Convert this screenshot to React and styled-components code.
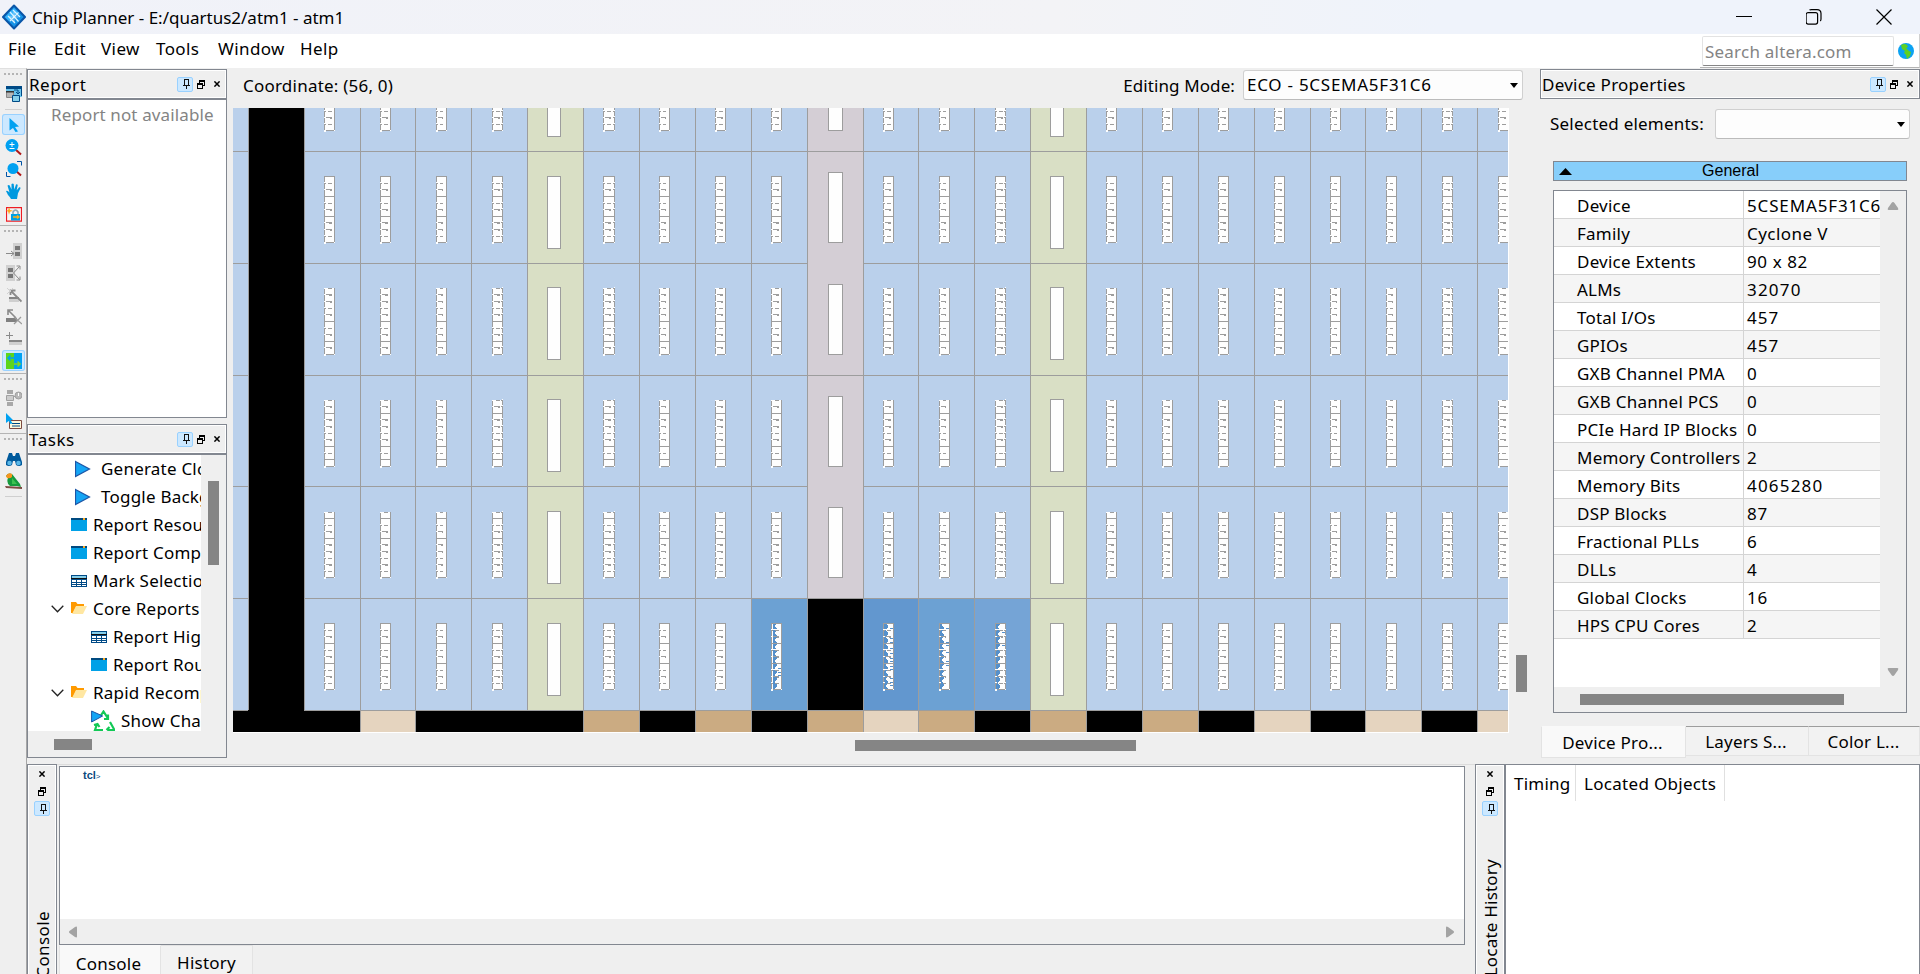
import React from "react";
import styled, { createGlobalStyle } from "styled-components";

const Global = createGlobalStyle`
  * { box-sizing: border-box; }
  html, body { margin: 0; padding: 0; overflow: hidden; }
  body { font-family: "Noto Sans", "Open Sans", sans-serif; font-size: 17px; color: #000; background: #efefef; }
  svg { display: block; flex: none; }
`;

const EDGE = "#828790";

const Label = styled.span`
  white-space: nowrap;
  flex: none;
  line-height: 22px;
  letter-spacing: ${(p) => p.$ls ?? 0.22}px;
  font-size: ${(p) => p.$size ?? 17}px;
  color: ${(p) => p.$color ?? "#000"};
`;

const Window = styled.div`
  width: 1920px;
  height: 974px;
  display: flex;
  flex-direction: column;
  overflow: hidden;
  background: #efefef;
`;
const TitleBar = styled.header`
  height: 34px;
  flex: none;
  display: flex;
  align-items: center;
  padding: 0 28px 0 2px;
  background: linear-gradient(90deg, #f0f2f9, #f3f3f6 55%, #eff3fb 75%, #eff3fb);
`;
const TitleText = styled(Label)`
  margin: 1px auto 0 6px;
`;
const WindowButtons = styled.div`
  display: flex;
  align-items: center;
  gap: 54px;
`;
const MenuBar = styled.nav`
  height: 34px;
  flex: none;
  display: flex;
  background: #fff;
`;
const Menus = styled.div`
  display: flex;
  flex: 1;
  padding: 4px 0 0 8px;
`;
const MenuItem = styled(Label)`
  width: ${(p) => p.$w}px;
`;
const SearchCell = styled.div`
  width: 220px;
  display: flex;
  padding: 2px 0 0 2px;
  border-bottom: 1px solid #b4b4b4;
  border-right: 1px solid #d0d0d0;
`;
const SearchBox = styled.div`
  width: 192px;
  height: 30px;
  border: 1px solid #e3e3e3;
  border-bottom: 1px solid #868686;
  border-radius: 2px;
  padding: 3px 0 0 2px;
`;
const Globe = styled.div`
  padding: 7px 0 0 4px;
`;

const Workspace = styled.div`
  flex: 1;
  display: flex;
  min-height: 0;
`;
const ToolStrip = styled.aside`
  width: 27px;
  flex: none;
  border-right: 1px solid #a6a6a6;
  border-top: 1px solid #e0e0e0;
  display: flex;
  flex-direction: column;
`;
const Tool = styled.div`
  height: ${(p) => (p.$on ? 21 : 22)}px;
  flex: none;
  margin: ${(p) => p.$gap ?? 0}px 1px 0 2px;
  display: flex;
  align-items: center;
  justify-content: center;
  border-radius: 3px;
  background: ${(p) => (p.$on ? "#cce8ff" : "transparent")};
  box-shadow: ${(p) => (p.$on ? "inset 0 0 0 1px #99d1ff" : "none")};
`;
const Rule = styled.div`
  height: 1px;
  flex: none;
  margin: ${(p) => p.$gap ?? 0}px ${(p) => (p.$short ? 4 : 0)}px 0 ${(p) => (p.$short ? 5 : 0)}px;
  background: ${(p) => (p.$short ? "#cfcfcf" : "#b4b4b4")};
`;
const Handle = styled.div`
  height: 10px;
  flex: none;
  display: flex;
  align-items: center;
  justify-content: center;
  gap: 2px;
`;
const Dot = styled.i`
  width: 2px;
  height: 2px;
  background: #b4b4b4;
`;

const Docks = styled.div`
  flex: 1;
  display: flex;
  flex-direction: column;
  min-width: 0;
`;
const UpperDocks = styled.div`
  height: 696px;
  flex: none;
  display: flex;
`;
const LowerDocks = styled.div`
  height: 210px;
  flex: none;
  display: flex;
`;
const LeftDocks = styled.div`
  width: 200px;
  flex: none;
  padding-top: 1px;
  display: flex;
  flex-direction: column;
  gap: 6px;
`;
const Dock = styled.section`
  height: ${(p) => p.$h}px;
  flex: none;
  display: flex;
  flex-direction: column;
`;
const DockHead = styled.div`
  height: ${(p) => (p.$joined ? 31 : 30)}px;
  flex: none;
  display: flex;
  align-items: center;
  border: 1px solid ${EDGE};
  border-bottom-width: ${(p) => (p.$joined ? 2 : 1)}px;
  box-shadow: inset 0 0 0 1px #fff;
  padding: 0 6px 0 1px;
`;
const DockTitle = styled(Label)`
  margin: 1px auto 0 0;
`;
const DockButtons = styled.div`
  display: flex;
  flex-direction: ${(p) => (p.$vertical ? "column" : "row")};
  align-items: center;
  gap: ${(p) => (p.$vertical ? 5 : 4)}px;
`;
const PinBox = styled.div`
  width: 16px;
  height: 15px;
  border: 1px solid #99d1ff;
  border-radius: 2px;
  background: #cce8ff;
  display: flex;
  justify-content: center;
  align-items: center;
  padding-left: 3px;
`;
const DockBody = styled.div`
  flex: 1;
  min-height: 0;
  background: ${(p) => p.$bg ?? "#fff"};
  border: 1px solid ${EDGE};
  border-top: 0;
`;
const EmptyNote = styled.div`
  padding: 3px 0 0 23px;
`;
const Thumb = styled.div`
  width: ${(p) => p.$w}px;
  height: ${(p) => p.$h}px;
  flex: none;
  background: #858585;
`;
const TaskArea = styled.div`
  display: flex;
  height: 276px;
`;
const TaskList = styled.div`
  width: 173px;
  background: #fff;
  overflow: hidden;
  flex: none;
`;
const TaskRow = styled.div`
  height: 28px;
  display: flex;
  align-items: center;
  padding-left: ${(p) => p.$indent}px;
`;
const TaskText = styled(Label)`
  margin-top: 0;
`;
const IconSlot = styled.span`
  width: ${(p) => p.$w}px;
  flex: none;
`;
const ScrollColumn = styled.div`
  padding: ${(p) => p.$pad};
`;

const Center = styled.main`
  width: 1313px;
  flex: none;
  display: flex;
  flex-direction: column;
`;
const ModeBar = styled.div`
  height: 40px;
  flex: none;
  display: flex;
  align-items: center;
  padding: 0 17px 6px 16px;
`;
const ModeText = styled(Label)`
  margin-top: 2px;
`;
const ModeLabel = styled(Label)`
  margin: 2px 8px 0 auto;
`;
const Combo = styled.div`
  width: ${(p) => p.$w}px;
  height: 30px;
  flex: none;
  background: #fdfdfd;
  border: 1px solid #d0d0d0;
  border-bottom-color: #bbb;
  border-radius: 3px;
  display: flex;
  align-items: center;
  justify-content: space-between;
  padding: 0 4px 0 3px;
`;
const CanvasRow = styled.div`
  display: flex;
  padding-left: 6px;
`;
const CanvasFrame = styled.div`
  width: 1276px;
  height: 625px;
  border-right: 1px solid #fff;
  border-bottom: 1px solid #fff;
`;

const RightDock = styled.div`
  width: 380px;
  flex: none;
  padding-top: 1px;
`;
const SelectedRow = styled.div`
  display: flex;
  align-items: center;
  padding: 10px 10px 0 10px;
  justify-content: space-between;
`;
const GeneralBar = styled.div`
  margin: 22px 13px 9px 13px;
  height: 20px;
  border: 1px solid ${EDGE};
  background: #87cefa;
  display: flex;
  align-items: center;
  padding-left: 5px;
  font-family: "Liberation Sans", sans-serif;
  font-size: 16px;
`;
const GeneralTitle = styled.span`
  flex: 1;
  text-align: center;
  padding-right: 17px;
  line-height: 18px;
`;
const PropFrame = styled.div`
  margin: 0 13px;
  height: 523px;
  border: 1px solid ${EDGE};
`;
const PropTop = styled.div`
  display: flex;
  height: 496px;
`;
const PropTable = styled.div`
  width: 326px;
  background: #fff;
  flex: none;
`;
const PropRow = styled.div`
  height: 28px;
  display: flex;
  border-bottom: 1px solid #d4d4d4;
  background: ${(p) => (p.$alt ? "#f5f5f5" : "#fff")};
`;
const PropName = styled.div`
  width: 190px;
  flex: none;
  padding: 3px 0 0 23px;
  border-right: 1px solid #d4d4d4;
`;
const PropValue = styled.div`
  flex: 1;
  overflow: hidden;
  padding: 3px 0 0 3px;
`;
const PropScroll = styled.div`
  flex: 1;
  display: flex;
  flex-direction: column;
  align-items: center;
  justify-content: space-between;
  padding: 9px 0 9px;
`;
const PropHScroll = styled.div`
  padding: 7px 0 0 26px;
`;
const TabRow = styled.div`
  display: flex;
  align-items: flex-start;
`;
const Tab = styled.div`
  width: ${(p) => p.$w}px;
  height: ${(p) => (p.$on ? 32 : 30)}px;
  flex: none;
  text-align: center;
  line-height: 22px;
  letter-spacing: 0.22px;
  background: ${(p) => (p.$on ? "#f9f9f9" : "#f2f2f2")};
  border: 1px solid #e3e3e3;
  border-left-width: ${(p) => (p.$on ? 1 : 0)}px;
  border-top-color: ${(p) => (p.$on ? "#f9f9f9" : p.$top ?? "#9d9d9d")};
  padding: ${(p) => p.$pad ?? "5px 2px 0 0"};
`;

const SideStrip = styled.div`
  width: ${(p) => p.$w}px;
  flex: none;
  border: solid ${EDGE};
  border-width: 1px ${(p) => p.$r}px 0 1px;
  box-shadow: inset 1px 1px 0 #fff, inset -1px 0 0 #fff;
  padding-top: 6px;
  display: flex;
  flex-direction: column;
  align-items: center;
`;
const Vertical = styled(Label)`
  writing-mode: vertical-rl;
  transform: rotate(180deg);
  margin: ${(p) => p.$m};
`;
const ConsolePane = styled.div`
  width: 1418px;
  flex: none;
  border-top: 1px solid #dcdcdc;
  padding: 1px 0 0 2px;
`;
const ConsoleFrame = styled.div`
  width: 1406px;
  height: 179px;
  border: 1px solid ${EDGE};
  background: #fff;
  display: flex;
  flex-direction: column;
`;
const Prompt = styled.div`
  flex: 1;
  padding: 2px 0 0 23px;
  font: bold 11px/13px "Liberation Sans", sans-serif;
  color: #0a4a80;
`;
const Chevron = styled.span`
  font-weight: normal;
  font-size: 8px;
`;
const ConsoleScroll = styled.div`
  height: 25px;
  background: #efefef;
  display: flex;
  align-items: center;
  justify-content: space-between;
  padding: 0 8px 0 7px;
`;
const HistoryPane = styled.div`
  flex: 1;
  background: #fff;
  border: 1px solid ${EDGE};
  border-width: 1px 1px 0 0;
  display: flex;
  align-items: flex-start;
`;
const HistoryHead = styled.div`
  width: ${(p) => p.$w}px;
  height: 36px;
  border-right: 1px solid #e0e0e0;
  padding: 7px 0 0 ${(p) => p.$pl}px;
`;

/* ---------- glyphs ---------- */
const Svg = ({ w = 16, h = w, vb, children, ...r }) => (
  <svg width={w} height={h} viewBox={vb ?? `0 0 ${w} ${h}`} {...r}>{children}</svg>
);
const Pin = () => (
  <Svg w={7} h={10} shapeRendering="crispEdges">
    <path d="M1.500 0v6M5.500 0v6M1 .5h5M0 6.500h7M3.500 7v3" stroke="#111" fill="none" />
  </Svg>
);
const Restore = () => (
  <Svg w={8} h={9} shapeRendering="crispEdges">
    <path d="M.5 3.500h5v5h-5zM0 4.500h6M2.500 3v-3M2 .5h6M2 1.500h6M7.500 0v6M6 5.500h2" stroke="#000" fill="none" />
  </Svg>
);
const Close = () => (
  <Svg w={6} h={6}>
    <path d="M.4 .4l5.200 5.200M5.600 .4l-5.200 5.200" stroke="#000" strokeWidth="1.500" />
  </Svg>
);
const Down = () => <Svg w={8} h={5}><path d="M0 0h8l-4 5z" /></Svg>;
const ScrollArrow = ({ dir }) => {
  const rot = { up: 0, right: 90, down: 180, left: 270 }[dir];
  return (
    <Svg w={12} h={12}>
      <path d="M6 2q.8 0 1.300 .8l3.700 5.200q1 2-.6 2h-8.800q-1.600 0-.6-2l3.700-5.200q.5-.8 1.300-.8z" fill="#a3a3a3" transform={`rotate(${rot} 6 6)`} />
    </Svg>
  );
};
const AppLogo = () => (
  <Svg w={24} h={26} vb="0 0 24 26">
    <path d="M12 1.500l11 11.500-11 11.500-11-11.500z" fill="#1793e6" stroke="#0a56a8" strokeWidth="2" strokeLinejoin="round" />
    <path d="M12 4l4 4-9 9-4-4z" fill="#35b2fb" />
    <path d="M8 8l8.500 9.500M16.500 8.500l-8.500 8.500M11 6l7 7M6 12l7 7" stroke="#d9f2ff" strokeWidth="1.300" />
    <path d="M12 8v10M7.500 13h9" stroke="#fff" strokeWidth=".8" opacity=".6" />
  </Svg>
);
const GlobeIcon = () => (
  <Svg w={16}>
    <circle cx="8" cy="8" r="8" fill="#0ba2f2" />
    <path d="M3 2q4-2 6 0l1 2-2 1 3 3 2 1-1 4-3 3-1-4-2-2 1-2-3-2z" fill="#5ed023" />
  </Svg>
);
const WindowIcon = () => (
  <Svg w={16} h={14} shapeRendering="crispEdges">
    <path d="M0 0h16v13h-16z" fill="#00a1e7" /><path d="M0 0h16v2h-16z" fill="#004a80" /><path d="M12 0h2v2h-2z" fill="#fda91f" />
  </Svg>
);
const TableIcon = () => (
  <Svg w={16} h={13} shapeRendering="crispEdges">
    <path d="M0 0h16v12h-16z" fill="#004a86" /><path d="M1 1h14v2h-14z" fill="#86cfea" /><path d="M0 3h16v1h-16z" fill="#111" />
    <path d="M1 5h4v2h-4zM6 5h4v2h-4zM11 5h4v2h-4zM1 8h4v1h-4zM6 8h4v1h-4zM11 8h4v1h-4zM1 10h4v1h-4zM6 10h4v1h-4zM11 10h4v1h-4z" fill="#fff" />
  </Svg>
);
const FolderIcon = () => (
  <Svg w={16} h={14}>
    <path d="M0 0h5l1.500 2h6.500v3h-8l-3 6h-2z" fill="#ff9a00" /><path d="M5 4h11l-4 8h-11z" fill="#ffe7a2" />
  </Svg>
);
const PlayIcon = () => <Svg w={16} h={18}><path d="M.5 1.500l14 7.500-14 7.500z" fill="#14a5f5" stroke="#1c55a6" strokeWidth="1.200" /></Svg>;
const RecycleIcon = () => (
  <Svg w={24} h={22}>
    <path d="M9.500 6l3-4.500 4.500 7M17 4.500v4.500h-4M19 12l4.500 8h-7M18.500 17l-3 3M12 20h-8l2-6M3 15l3.500-1 2 3" stroke="#12c956" strokeWidth="2.200" fill="none" />
    <path d="M.6 1l11 5-11 6z" fill="#14a5f5" stroke="#1c55a6" />
  </Svg>
);
const ExpandIcon = () => <Svg w={13} h={9}><path d="M.7 .7l5.800 6 5.800-6" stroke="#222" strokeWidth="1.300" fill="none" /></Svg>;

/* ---------- tool strip icons ---------- */
const toolIcons = {
  cascade: (
    <Svg w={16}><path d="M0 1h16v10h-16z" fill="#6ac4ec" /><path d="M0 0h16v3h-16z" fill="#004a86" /><path d="M.5 5.500h7v6h-7z" fill="#b5b5b5" stroke="#888" /><path d="M0 5h8v1.500h-8z" fill="#333" /><path d="M6.500 9.500h7v6h-7z" fill="#86cfea" stroke="#004a86" /><path d="M8 4h4v3M10 6l2 2 2-2" stroke="#004a86" fill="none" /><path d="M15.500 0v10" stroke="#004a86" /></Svg>
  ),
  cursor: <Svg w={12} h={14}><path d="M1.500 0l9.500 8.500-4 .5 3 4.500-2.500 .5-2.500-4-3.500 2.500z" fill="#00a1f1" /></Svg>,
  zoom: <Svg w={17}><path d="M10 10l6 5.500" stroke="#b01717" strokeWidth="2" /><circle cx="7" cy="6.500" r="6.500" fill="#00a1f1" /><path d="M4.500 5.500h5M7 3v5M4.500 9.500h5" stroke="#fff" /></Svg>,
  fit: <Svg w={16}><path d="M9 9l6 5.500" stroke="#b01717" strokeWidth="2" /><circle cx="7" cy="7.500" r="5.500" fill="#00a1f1" /><path d="M11 .5h4.500v4M.5 11v4.500h4" stroke="#0053a5" fill="none" /></Svg>,
  hand: <Svg w={16}><path d="M5 16q-1-2-3-4l-2-4q1.500-1 3.500 1.500l-2-7q1.500-1 2.200 0l1.800 4 0-5.500q1.500-1 2.200 0l.6 5.500 1.700-5q1.500-.6 1.700 .7l-1 5 2.500-3q1.500-.3 1.300 1l-2.500 5-1 5.800z" fill="#0099df" /></Svg>,
  lock: <Svg w={16} h={15}><path d="M.5 .7h15v13.500h-15z" fill="#f5f5f5" stroke="#ed1c24" strokeWidth="1.200" /><path d="M7 8v-3q2.500-4 5 0v3" stroke="#8ba6b5" fill="none" strokeWidth="1.500" /><path d="M5 7h9v6.500h-9z" fill="#00a1e7" /><path d="M7 10h5M11 8.500l2 1.500-2 1.500" stroke="#fcb017" fill="none" strokeWidth="1.300" /><path d="M3 0l1 3 3 .7-3 1-1 3-.8-3-2-1 2-.7z" fill="#fda91f" /></Svg>,
  fanIn: <Svg w={16}><path d="M7 0h9v16h-9z" fill="#d0d0d0" /><path d="M9 3h5v4h-5zM9 9h5v4h-5z" fill="#777" /><path d="M0 10.500h8M5 8l3 2.500-3 2.500" stroke="#8a8a8a" fill="none" /></Svg>,
  fanOut: <Svg w={16}><path d="M0 0h9v16h-9z" fill="#d0d0d0" /><path d="M2 3h5v4h-5zM2 9h5v4h-5z" fill="#777" /><path d="M7.500 8l6-6.500M7.500 8l6 6.500M10.500 1h3.500v3.500M10.500 15h3.500v-3.500" stroke="#8a8a8a" fill="none" /></Svg>,
  addConn: <Svg w={16}><path d="M3 10h10v2h-10z" fill="#858585" /><path d="M3 12h10v3h-10z" fill="#cfcfcf" /><path d="M5 4l10.500 10.500M4.500 8v-4.500h5" stroke="#8a8a8a" strokeWidth="1.800" fill="none" /><path d="M1 1l4 4M7 1l-6 6" stroke="#d0d0d0" /></Svg>,
  delConn: <Svg w={16}><path d="M0 9h11v4h-11z" fill="#808080" /><path d="M2 1l8 8M2 6v-5h5" stroke="#8a8a8a" strokeWidth="1.600" fill="none" /><path d="M8 8l8 7M15 8l-7 7" stroke="#9a9a9a" strokeWidth="1.300" /></Svg>,
  plus: <Svg w={16} h={14}><path d="M0 3.500h7M3.500 0v7" stroke="#8a8a8a" /><path d="M3 8h13v2h-13z" fill="#858585" /><path d="M3 10h13v3h-13z" fill="#cfcfcf" /></Svg>,
  swap: <Svg w={16}><path d="M0 0h8v16h-8z" fill="#5dd51c" /><path d="M8 0h8v16h-8z" fill="#00a1f1" /><path d="M8 5h-6M4.500 2.500l-2.500 2.500 2.500 2.500" stroke="#00a1f1" fill="none" strokeWidth="1.500" /><path d="M8 11h6M11.500 8.500l2.500 2.500-2.500 2.500" stroke="#7fd924" fill="none" strokeWidth="1.500" /></Svg>,
  timing: <Svg w={16}><path d="M1 0h6v4h-6zM1 12h6v4h-6z" fill="#a8a8a8" /><path d="M.5 5.500h7v5h-7z" fill="#ccc" stroke="#a0a0a0" /><path d="M7 8l3-3" stroke="#a0a0a0" /><circle cx="12.500" cy="5.500" r="3.500" fill="#b8b8b8" stroke="#a0a0a0" /><path d="M12.500 3v3" stroke="#fff" /></Svg>,
  props: <Svg w={16}><path d="M3.500 7.500h12v8h-12z" fill="#fff9dd" stroke="#7d4b42" /><path d="M6 10.500h8M6 13h8" stroke="#004a86" /><path d="M0 0l7 7-2.500 .3 2 3-2 .7-1.800-3-2.700 2z" fill="#00a1f1" /></Svg>,
  find: <Svg w={16} h={15}><path d="M3 1h3l1 3h2l1-3h3l3 9v3q-3 2-6 0l-1-4h-2l-1 4q-3 2-6 0v-3z" fill="#005a9c" /><circle cx="3.500" cy="11" r="2.300" fill="#5bb8e8" /><circle cx="12.500" cy="11" r="2.300" fill="#5bb8e8" /></Svg>,
  bird: <Svg w={17} h={16}><path d="M1 3q2-3.500 6-2l8 10 1 3-4-1-7 0q-4-3-2-8z" fill="#169b3d" /><path d="M1 3q2-4 6-2v3q-2 2-5 1z" fill="#f7941d" /><path d="M7 5l5 6-5 0z" fill="#3ec251" /><path d="M0 13l17 1v2l-16-1z" fill="#7d4b42" /></Svg>,
};
const toolItems = [
  ["handle"], ["cascade", 4], ["rule", 4, true], ["cursor", 4, true], ["zoom", 1], ["fit"], ["hand"], ["lock", 1], ["rule", 0],
  ["handle"], ["fanIn", 4], ["fanOut"], ["addConn"], ["delConn"], ["plus"], ["swap", 0, true], ["rule", 2],
  ["handle"], ["timing", 3], ["props", 1], ["rule", 1], ["handle"], ["find", 4], ["bird"], ["rule", 4, true],
];

/* ---------- floorplan ---------- */
const OX = 233, OY = 108;
const LINE = "#9d9d9d";
const colX = (i) => Math.floor(248.33 + 55.88 * i) - OX;
const rowY = [39, 151, 263, 375, 486, 598, 710].map((y) => y - OY);
const almTop = [64, 176, 288, 400, 512, 623].map((y) => y - OY);
const ramTop = [64, 176, 287, 399, 511, 623].map((y) => y - OY);
const dspTop = [60, 172, 284, 396, 507].map((y) => y - OY);
/* D dash, H hook, T thick hook, F full line, P open top, B bottom edge */
const ticks = [
  [[0, "F"], [47, "D"], [53, "H"], [60, "D"], [66, "B"]],
  [[0, "F"], [7, "D"], [13, "H"], [20, "F"], [27, "D"], [33, "H"], [40, "F"], [46, "T"], [53, "H"], [60, "D"], [66, "B"]],
  [[0, "P"], [6, "T"], [13, "H"], [20, "D"], [26, "H"], [33, "F"], [40, "D"], [46, "H"], [53, "F"], [59, "H"], [66, "B"]],
  [[0, "P"], [6, "H"], [13, "F"], [19, "T"], [26, "H"], [33, "D"], [39, "H"], [46, "F"], [53, "D"], [59, "F"], [66, "B"]],
  [[0, "P"], [6, "F"], [13, "D"], [19, "H"], [26, "F"], [32, "T"], [39, "H"], [46, "D"], [52, "T"], [59, "D"], [65, "B"]],
  [[0, "F"], [7, "D"], [13, "H"], [20, "F"], [27, "D"], [33, "H"], [40, "F"], [47, "D"], [53, "H"], [60, "D"], [66, "B"]],
];
const almX = { 1: 324, 2: 380, 3: 436, 4: 492, 6: 603, 7: 659, 8: 715, 9: 771, 11: 883, 12: 939, 13: 995, 15: 1106, 16: 1162, 17: 1218, 18: 1274, 19: 1330, 20: 1386, 21: 1442, 22: 1498 };
const narrow = [3, 7, 12, 19, 20];
const split = [4, 6, 13, 21, 22];
const used = { 9: "#6ca1d3", 11: "#6297cf", 12: "#6ca1d3", 13: "#75a4d6" };
const io = { 2: "l", 6: "t", 8: "t", 10: "t", 11: "l", 12: "t", 14: "t", 16: "t", 18: "l", 20: "l", 22: "l" };

function Alm({ col, row }) {
  const x = almX[col] - OX, y = almTop[row];
  const w = col === 6 || col === 22 ? 12 : 11;
  const e = narrow.includes(col) ? 7 : 8;
  let gray = "", white = "";
  const g = (a, b, c, d = 1) => { gray += `M${x + a} ${y + b}h${c}v${d}h${-c}z`; };
  const k = (a, b, c, d = 1) => { white += `M${x + a} ${y + b}h${c}v${d}h${-c}z`; };
  const last = ticks[row][ticks[row].length - 1][0];
  g(0, 0, 1, last); g(w - 1, 0, 1, last);
  ticks[row].forEach(([t, kind]) => {
    if (kind === "F") g(0, t, w);
    if (kind === "P") { g(4, t, e - 4); k(0, t, 1); }
    if (kind === "D") { g(4, t, e - 4); g(0, t, 2); k(0, t - 1, 2); }
    if (kind === "H" || kind === "T") { g(2, t, e - 2); g(kind === "T" ? 5 : 6, t + 1, e - (kind === "T" ? 5 : 6)); k(0, t, 2); }
    if (kind === "B") { g(2, t, w - 3); k(0, t, 2, 2); }
    if (split.includes(col) && "DHTP".includes(kind)) { g(w - 2, t, 1); k(w - 1, t - 1, 1); }
  });
  let blue = "";
  if (used[col] && row === 5) {
    const base = col === 9 ? 2 : 1;
    for (let t = 1; t < 66; t++) {
      const n = [3, 2, 4, 4, 2, 3, 4][(t * 3 + col) % 7];
      if (t % 20 !== 6) blue += `M${x + base} ${y + t}h${n}v1h${-n}z`;
    }
    const marks = { 9: [45, 49, 52], 11: [5, 15, 19, 25, 30, 35, 38, 43, 46, 55, 59, 62], 12: [5, 19, 22, 29, 38, 42], 13: [9, 22] }[col];
    marks.forEach((t) => { blue += `M${x + 7} ${y + t}h3v1h-3z`; });
  }
  return (
    <g>
      <rect x={x} y={y} width={w} height={last + 1} fill="#fefefe" />
      {blue && <path d={blue} fill="#5590cb" />}
      <path d={gray} fill={LINE} />
      <path d={white} fill="#fefefe" />
    </g>
  );
}
const Slot = ({ x, y, w, h }) => <rect x={x + 0.5} y={y + 0.5} width={w - 1} height={h - 1} fill="#fefefe" stroke={LINE} />;

function Floorplan() {
  const cells = [], lines = [], parts = [];
  const bottom = rowY[6];
  const kindOf = (i) => (i === 0 ? "void" : i === 5 || i === 14 ? "ram" : i === 10 ? "dsp" : "lab");
  const fill = { void: "#000", ram: "#d9dfc5", dsp: "#d4ced5", lab: "#bad0eb" };
  for (let i = 0; i <= 22; i++) {
    const x = colX(i), w = colX(i + 1) - x, kind = kindOf(i);
    cells.push(<rect key={`c${i}`} x={x} y={0} width={w} height={bottom} fill={fill[kind]} />);
    if (used[i] || i === 10) cells.push(<rect key={`u${i}`} x={x} y={rowY[5]} width={w} height={112} fill={used[i] ?? "#000"} />);
    if (io[i]) cells.push(<rect key={`i${i}`} x={x} y={bottom} width={w} height={22} fill={io[i] === "l" ? "#e5d4bf" : "#cbab82"} />);
    lines.push(`M${x} 0h1v${bottom}h-1z`);
    if (io[i] || io[i - 1]) lines.push(`M${x} ${bottom}h1v22h-1z`);
    for (let r = 1; r <= 6; r++) {
      if (kind === "void" || (kind === "dsp" && (r === 2 || r === 4))) continue;
      lines.push(`M${x} ${rowY[r]}h${w}v1h${-w}z`);
    }
    for (let r = 0; r < 6; r++) {
      if (kind === "lab") parts.push(<Alm key={`${i}-${r}`} col={i} row={r} />);
      if (kind === "ram") parts.push(<Slot key={`${i}-${r}`} x={x + 20} y={ramTop[r]} w={14} h={73} />);
      if (kind === "dsp" && r < 5) parts.push(<Slot key={`${i}-${r}`} x={x + 21} y={dspTop[r]} w={15} h={71} />);
    }
  }
  for (let r = 1; r <= 6; r++) lines.push(`M0 ${rowY[r]}h15v1h-15z`);
  return (
    <svg width="1275" height="624" viewBox="0 0 1275 624" shapeRendering="crispEdges">
      <rect width="1275" height="624" fill="#000" />
      <rect width="16" height={bottom} fill="#bad0eb" />
      {cells}
      <path d={lines.join("")} fill={LINE} />
      {parts}
    </svg>
  );
}

/* ---------- data ---------- */
const menus = [["File", 46], ["Edit", 47], ["View", 55], ["Tools", 62], ["Window", 82], ["Help", 60]];
const tasks = [
  [47, PlayIcon, 26, "Generate Clock Regions"], [47, PlayIcon, 26, "Toggle Background"],
  [43, WindowIcon, 22, "Report Resources"], [43, WindowIcon, 22, "Report Components"], [43, TableIcon, 22, "Mark Selection"],
  [23, FolderIcon, 22, "Core Reports", true], [63, TableIcon, 22, "Report High-Speed"], [63, WindowIcon, 22, "Report Routing"],
  [23, FolderIcon, 22, "Rapid Recompile", true], [63, RecycleIcon, 30, "Show Changes"],
];
const props = [
  ["Device", "5CSEMA5F31C6", 0.85], ["Family", "Cyclone V", 0.45], ["Device Extents", "90 x 82", 0.6], ["ALMs", "32070", 1.2], ["Total I/Os", "457", 1], ["GPIOs", "457", 1],
  ["GXB Channel PMA", "0"], ["GXB Channel PCS", "0"], ["PCIe Hard IP Blocks", "0"], ["Memory Controllers", "2"], ["Memory Bits", "4065280", 1.2],
  ["DSP Blocks", "87", 0.9], ["Fractional PLLs", "6"], ["DLLs", "4"], ["Global Clocks", "16", 0.9], ["HPS CPU Cores", "2"],
];

const DockHeader = ({ title, joined }) => (
  <DockHead $joined={joined}>
    <DockTitle $ls={joined ? 0.55 : 0.25}>{title}</DockTitle>
    <DockButtons><PinBox><Pin /></PinBox><Restore /><IconSlot $w={1} /><Close /></DockButtons>
  </DockHead>
);
const SideButtons = () => (
  <DockButtons $vertical><Close /><IconSlot $w={1} /><Restore /><PinBox><Pin /></PinBox></DockButtons>
);

export default function App() {
  return (
    <Window>
      <Global />
      <TitleBar>
        <AppLogo />
        <TitleText $ls={0}>Chip Planner - E:/quartus2/atm1 - atm1</TitleText>
        <WindowButtons>
          <Svg w={16}><path d="M0 7.500h16" stroke="#000" /></Svg>
          <Svg w={16}><rect x=".1" y="3.600" width="11.500" height="11.500" rx="2" fill="none" stroke="#000" strokeWidth="1.200" /><path d="M3.500 1q.5-.4 2-.4h5.500q4 0 4 4v5.500q0 1.500-.8 2" fill="none" stroke="#000" strokeWidth="1.200" /></Svg>
          <Svg w={16}><path d="M.5 .5l15 15M15.500 .5l-15 15" stroke="#000" strokeWidth="1.200" /></Svg>
        </WindowButtons>
      </TitleBar>
      <MenuBar>
        <Menus>{menus.map(([t, w]) => <MenuItem key={t} $w={w} $ls={0.4}>{t}</MenuItem>)}</Menus>
        <SearchCell>
          <SearchBox><Label $color="#848484">Search altera.com</Label></SearchBox>
          <Globe><GlobeIcon /></Globe>
        </SearchCell>
      </MenuBar>
      <Workspace>
        <ToolStrip>
          {toolItems.map(([name, gap, on], i) => {
            if (name === "handle") return <Handle key={i}><Dot /><Dot /><Dot /><Dot /><Dot /></Handle>;
            if (name === "rule") return <Rule key={i} $gap={gap} $short={on} />;
            return <Tool key={i} $gap={gap} $on={on}>{toolIcons[name]}</Tool>;
          })}
        </ToolStrip>
        <Docks>
          <UpperDocks>
            <LeftDocks>
              <Dock $h={349}>
                <DockHeader title="Report" joined />
                <DockBody><EmptyNote><Label $color="#848484" $ls={0.12}>Report not available</Label></EmptyNote></DockBody>
              </Dock>
              <Dock $h={334}>
                <DockHeader title="Tasks" joined />
                <DockBody $bg="#efefef">
                  <TaskArea>
                    <TaskList>
                      {tasks.map(([indent, Icon, w, text, open]) => (
                        <TaskRow key={text} $indent={indent}>
                          {open && <IconSlot $w={20}><ExpandIcon /></IconSlot>}
                          <IconSlot $w={w}><Icon /></IconSlot>
                          <TaskText>{text}</TaskText>
                        </TaskRow>
                      ))}
                    </TaskList>
                    <ScrollColumn $pad="26px 0 0 7px"><Thumb $w={11} $h={84} /></ScrollColumn>
                  </TaskArea>
                  <ScrollColumn $pad="8px 0 0 26px"><Thumb $w={38} $h={11} /></ScrollColumn>
                </DockBody>
              </Dock>
            </LeftDocks>
            <Center>
              <ModeBar>
                <ModeText>Coordinate: (56, 0)</ModeText>
                <ModeLabel $ls={0.1}>Editing Mode:</ModeLabel>
                <Combo $w={280}><Label $ls={0.74}>ECO - 5CSEMA5F31C6</Label><Down /></Combo>
              </ModeBar>
              <CanvasRow>
                <CanvasFrame><Floorplan /></CanvasFrame>
                <ScrollColumn $pad="547px 0 0 7px"><Thumb $w={11} $h={37} /></ScrollColumn>
              </CanvasRow>
              <ScrollColumn $pad="7px 0 0 628px"><Thumb $w={281} $h={11} /></ScrollColumn>
            </Center>
            <RightDock>
              <DockHeader title="Device Properties" />
              <SelectedRow><Label>Selected elements:</Label><Combo $w={195}><span /><Down /></Combo></SelectedRow>
              <GeneralBar><Svg w={13} h={7}><path d="M0 7l6.500-7 6.500 7z" /></Svg><GeneralTitle>General</GeneralTitle></GeneralBar>
              <PropFrame>
                <PropTop>
                  <PropTable>
                    {props.map(([n, v, ls], i) => (
                      <PropRow key={n} $alt={i % 2 === 1}>
                        <PropName><Label>{n}</Label></PropName>
                        <PropValue><Label $ls={ls}>{v}</Label></PropValue>
                      </PropRow>
                    ))}
                  </PropTable>
                  <PropScroll><ScrollArrow dir="up" /><ScrollArrow dir="down" /></PropScroll>
                </PropTop>
                <PropHScroll><Thumb $w={264} $h={11} /></PropHScroll>
              </PropFrame>
              <ScrollColumn $pad="13px 0 0 1px">
                <TabRow>
                  <Tab $w={145} $on>Device Pro...</Tab>
                  <Tab $w={123} $pad="4px 2px 0 0">Layers S...</Tab>
                  <Tab $w={111} $pad="4px 1px 0 0">Color L...</Tab>
                </TabRow>
              </ScrollColumn>
            </RightDock>
          </UpperDocks>
          <LowerDocks>
            <SideStrip $w={30} $r={1}><SideButtons /><Vertical $ls={0.4} $m="95px 0 0 2px">Console</Vertical></SideStrip>
            <ConsolePane>
              <ConsoleFrame>
                <Prompt>tcl<Chevron>&gt;</Chevron></Prompt>
                <ConsoleScroll><ScrollArrow dir="left" /><ScrollArrow dir="right" /></ConsoleScroll>
              </ConsoleFrame>
              <TabRow>
                <Tab $w={102} $on $pad="7px 3px 0 0">Console</Tab>
                <Tab $w={92} $top="#e3e3e3" $pad="6px 0 0">History</Tab>
              </TabRow>
            </ConsolePane>
            <SideStrip $w={31} $r={2}><SideButtons /><Vertical $m="43px 0 0 2px">Locate History</Vertical></SideStrip>
            <HistoryPane>
              <HistoryHead $w={70} $pl={8}><Label>Timing</Label></HistoryHead>
              <HistoryHead $w={149} $pl={8}><Label $ls={0.3}>Located Objects</Label></HistoryHead>
            </HistoryPane>
          </LowerDocks>
        </Docks>
      </Workspace>
    </Window>
  );
}
